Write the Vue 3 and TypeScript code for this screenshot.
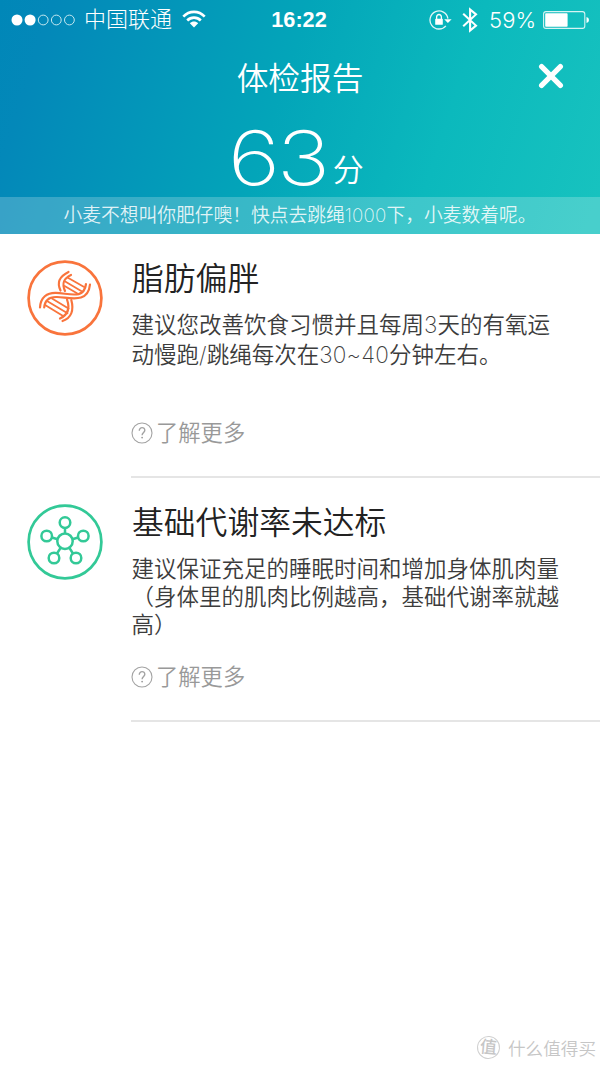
<script setup lang="ts">
interface Advice {
  kind: 'dna' | 'molecule'
  title: string
  lines: string[]
}

interface Run {
  text: string
  latin: boolean
}

const signal: boolean[] = [true, true, false, false, false]

const notice = '小麦不想叫你肥仔噢！快点去跳绳1000下，小麦数着呢。'

const advices: Advice[] = [
  {
    kind: 'dna',
    title: '脂肪偏胖',
    lines: ['建议您改善饮食习惯并且每周3天的有氧运', '动慢跑/跳绳每次在30~40分钟左右。'],
  },
  {
    kind: 'molecule',
    title: '基础代谢率未达标',
    lines: ['建议保证充足的睡眠时间和增加身体肌肉量', '（身体里的肌肉比例越高，基础代谢率就越', '高）'],
  },
]

// Digits are set in a thinner weight than the surrounding Chinese text.
function runs(line: string): Run[] {
  return line
    .split(/([0-9~/]+)/)
    .filter((part) => part.length > 0)
    .map((part) => ({ text: part, latin: /^[0-9~/]/.test(part) }))
}
</script>

<template>
  <main class="screen">
    <header class="hero">
      <div class="status">
        <div class="status-left">
          <svg class="dots" width="64" height="12" viewBox="0 0 64 12">
            <circle
              v-for="(on, i) in signal"
              :key="i"
              :cx="6 + i * 13.1"
              cy="6"
              :r="on ? 5.5 : 4.9"
              :fill="on ? '#fff' : 'none'"
              :stroke="on ? 'none' : '#c5e8f0'"
              stroke-width="1"
            />
          </svg>
          <span class="carrier">中国联通</span>
          <svg class="wifi" width="24" height="18" viewBox="0 0 24 18">
            <g fill="none" stroke="#fff" stroke-width="2.6">
              <path d="M1.3 6.6C7.2.3 16.8.3 22.7 6.6" />
              <path d="M5.2 10.5C9 6.6 15 6.6 18.8 10.5" />
            </g>
            <path d="M7.8 13.3C10.2 10.9 13.8 10.9 16.2 13.3L12 17.4Z" fill="#fff" />
          </svg>
        </div>
        <span class="clock">16:22</span>
        <div class="status-right">
          <svg class="lock" width="23" height="20" viewBox="0 0 23 20">
            <path d="M16.9 15.8A9 9 0 1 1 18.9 8.6" fill="none" stroke="#e2f6f7" stroke-width="1.3" />
            <path d="M15.2 9.2H22.6L18.9 12.9Z" fill="#fff" />
            <rect x="6.2" y="8.8" width="7.6" height="6" rx=".6" fill="#fff" />
            <path d="M7.6 9V7.2a2.4 2.7 0 0 1 4.8 0V9" fill="none" stroke="#fff" stroke-width="1.3" />
          </svg>
          <svg class="bluetooth" width="16" height="26" viewBox="0 0 16 26">
            <path d="M1.2 6.7L14 18.6L8.1 23.6V2.4L14 7.4L1.2 19.3" fill="none" stroke="#fff" stroke-width="2.1" />
          </svg>
          <span class="percent">59%</span>
          <svg class="battery" width="47" height="18" viewBox="0 0 47 18">
            <rect x=".6" y=".6" width="41.2" height="16.8" rx="2.4" fill="none" stroke="#d7f4f3" stroke-width="1.1" />
            <rect x="2.2" y="2.2" width="22.4" height="13.6" rx=".8" fill="#fff" />
            <path d="M43.5 6Q46 6.6 46 9T43.5 12Z" fill="#fff" />
          </svg>
        </div>
      </div>

      <div class="nav">
        <h1>体检报告</h1>
        <svg class="close" width="26" height="26" viewBox="0 0 26 26">
          <path d="M3.6 3.6L22.4 22.4M22.4 3.6L3.6 22.4" stroke="#fff" stroke-width="5.2" stroke-linecap="round" />
        </svg>
      </div>

      <div class="score"><span class="number">63</span><span class="unit">分</span></div>
      <p class="notice">
        <span v-for="(run, i) in runs(notice)" :key="i" :class="{ latin: run.latin }">{{ run.text }}</span>
      </p>
    </header>

    <section v-for="item in advices" :key="item.kind" class="advice" :class="item.kind">
      <svg v-if="item.kind === 'dna'" class="badge" width="76" height="76" viewBox="0 0 76 76">
        <g fill="none" stroke="#f9743c" stroke-width="2.2" stroke-linecap="round">
          <circle cx="38" cy="38" r="36.4" stroke-width="2.7" />
          <path d="M13 47.5C13.5 37.5 20 32.5 29 32.8C42 33.3 57 40 59 24" />
          <path d="M17.2 47.5C17.8 40 22.5 36.7 30 37C43 37.5 61 44 63 24.5" />
          <path d="M41.5 12C32.5 16.5 29.5 22 33.5 30.5" />
          <path d="M44 15C36.5 18.5 34.5 23 38 31" />
          <path d="M40 39.5C43 48 41.5 54.5 33 58.5" />
          <path d="M44.3 40C47 50 44.5 58 35.5 61" />
          <path d="M40.5 17.5L58 27.5M38.2 21.5L55 31.5M37.6 26L50 33.2M25 38.5L41.5 48.5M20 41L40.5 53.2M18.5 45.2L36.5 56.2" stroke-width="1.8" />
        </g>
      </svg>
      <svg v-else class="badge" width="76" height="76" viewBox="0 0 76 76">
        <g fill="none" stroke="#33c997" stroke-width="2.5">
          <circle cx="38" cy="38" r="36.4" stroke-width="2.7" />
          <circle cx="38" cy="37.2" r="7.7" />
          <circle cx="38" cy="18.6" r="5.3" />
          <circle cx="19.7" cy="32" r="5.3" />
          <circle cx="56.3" cy="32" r="5.3" />
          <circle cx="27" cy="54" r="5.3" />
          <circle cx="49" cy="54" r="5.3" />
          <path d="M38 24V29.5M24.9 33.5L30.6 35.2M51.1 33.5L45.4 35.2M30 49.5L33.6 43.8M46 49.5L42.4 43.8" />
        </g>
      </svg>
      <div class="content">
        <h2>{{ item.title }}</h2>
        <div class="text">
          <p v-for="line in item.lines" :key="line">
            <span v-for="(run, i) in runs(line)" :key="i" :class="{ latin: run.latin }">{{ run.text }}</span>
          </p>
        </div>
        <a class="more">
          <svg width="22" height="22" viewBox="0 0 22 22">
            <g fill="none" stroke="#a3a3a3" stroke-width="1.1">
              <circle cx="11" cy="11" r="10" />
              <path d="M8.3 8.7C8.2 4.6 14 4.8 13.8 8.4C13.7 10.4 11.1 10.6 11.1 13.2" stroke-width="1.4" />
            </g>
            <circle cx="11.1" cy="15.6" r=".9" fill="#999" />
          </svg>
          <span>了解更多</span>
        </a>
      </div>
    </section>

    <footer class="watermark">
      <span class="seal">值</span>
      <span>什么值得买</span>
    </footer>
  </main>
</template>

<style>
body {
  margin: 0;
  background: #fff;
}
</style>

<style scoped>
.screen {
  box-sizing: border-box;
  width: 600px;
  height: 1065px;
  display: flex;
  flex-direction: column;
  overflow: hidden;
  background: #fff;
  color: #222;
  font-family: Inter, "Noto Sans CJK SC", sans-serif;
  font-weight: 350;
}

h1,
h2,
p {
  margin: 0;
  font-weight: 350;
  white-space: nowrap;
}

svg {
  display: block;
  flex: none;
}

.latin {
  font-weight: 200;
  letter-spacing: 0.2px;
}

.hero {
  height: 234px;
  flex: none;
  display: flex;
  flex-direction: column;
  color: #fff;
  background: linear-gradient(108deg, #0087b8 0%, #0388b9 8%, #03a5b9 46%, #0bb9bd 72%, #18c3bf 100%);
}

.status {
  height: 38px;
  display: grid;
  grid-template-columns: 1fr auto 1fr;
  align-items: center;
  font-family: "Liberation Sans", "Noto Sans CJK SC", sans-serif;
}

.status-left {
  display: flex;
  align-items: center;
  padding-left: 11px;
}

.carrier {
  margin-left: 9px;
  font-size: 22px;
  font-weight: 300;
  line-height: 38px;
  white-space: nowrap;
}

.wifi {
  margin: 0 0 1px 10px;
}

.clock {
  font-size: 21.7px;
  font-weight: 700;
  line-height: 38px;
  padding-top: 1px;
  margin-left: -2px;
}

.status-right {
  display: flex;
  align-items: center;
  justify-content: flex-end;
  padding-right: 10px;
}

.bluetooth {
  margin-left: 10px;
}

.percent {
  margin: 0 7px 0 11px;
  font-family: Inter, sans-serif;
  font-size: 22px;
  font-weight: 300;
}

.nav {
  height: 78px;
  display: grid;
  grid-template-columns: 1fr auto 1fr;
  align-items: center;
}

.nav h1 {
  grid-column: 2;
  font-size: 31.7px;
  font-weight: 350;
  line-height: 76px;
  padding-top: 3px;
}

.close {
  justify-self: end;
  margin: 0 36px 4px 0;
}

.score {
  height: 81px;
  display: flex;
  justify-content: center;
  align-items: flex-start;
}

.number {
  font-size: 75px;
  font-weight: 200;
  line-height: 84px;
  letter-spacing: -3px;
  transform: scaleX(1.2);
}

.unit {
  margin: 34px 0 0 14px;
  font-size: 31px;
  line-height: 40px;
}

.notice {
  height: 37px;
  text-align: center;
  font-size: 18.75px;
  line-height: 37px;
  background: rgba(255, 255, 255, 0.21);
  color: rgba(255, 255, 255, 0.86);
}

.advice {
  box-sizing: border-box;
  height: 244px;
  flex: none;
  display: flex;
  padding: 26px 0 0 27.4px;
}

.content {
  box-sizing: border-box;
  flex: 1;
  height: 218px;
  margin-left: 27.6px;
  display: flex;
  flex-direction: column;
  border-bottom: 2px solid #e5e5e5;
}

h2 {
  height: 49px;
  padding: 1px 0 0 1px;
  box-sizing: border-box;
  font-size: 31.8px;
  line-height: 36px;
}

.text {
  height: 108px;
  padding: 1px 0 0 0.5px;
  box-sizing: border-box;
  font-size: 22.5px;
  line-height: 30px;
  color: #3c3c3c;
}

.molecule .text {
  line-height: 28px;
  padding-top: 2px;
}

.more {
  display: flex;
  align-items: center;
  gap: 3px;
  font-size: 22.3px;
  line-height: 32px;
  color: #999;
}

.watermark {
  margin-top: auto;
  height: 36px;
  display: flex;
  align-items: center;
  justify-content: flex-end;
  gap: 8px;
  padding-right: 4px;
  font-size: 17.6px;
  color: #c6c6c6;
}

.seal {
  width: 21px;
  height: 21px;
  border: 1px solid #d0d0d0;
  border-radius: 50%;
  font-size: 17px;
  font-weight: 500;
  line-height: 20px;
  text-align: center;
  transform: rotate(5deg);
}
</style>
